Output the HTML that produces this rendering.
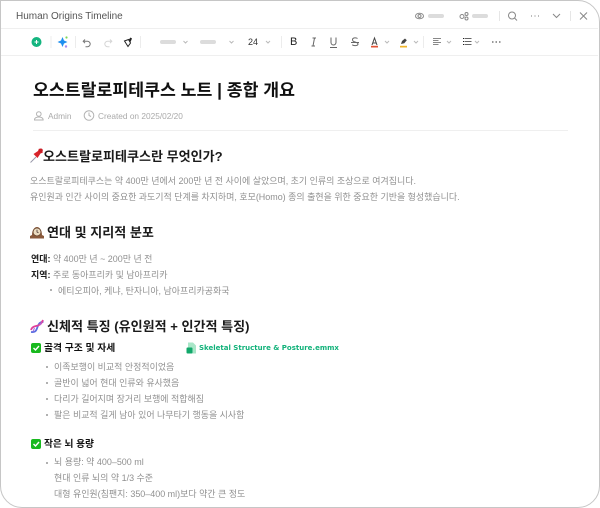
<!DOCTYPE html>
<html lang="ko"><head><meta charset="utf-8">
<style>
html,body{margin:0;padding:0;background:#fff}
#w{position:relative;width:600px;height:508px;overflow:hidden;background:#fff;font-family:"Liberation Sans","Noto Sans CJK KR",sans-serif}
#f{position:absolute;left:0;top:0;width:598px;height:506px;border:1px solid #c6c6c6;border-radius:0 22px 22px 22px;pointer-events:none;z-index:5}
.t{position:absolute;white-space:nowrap;line-height:16px}
.h{font-weight:700;color:#1a1a1a;font-size:13.05px}
.p{font-size:8.96px;color:#909090}
.b{font-weight:700;color:#1a1a1a}
.d{position:absolute;width:2px;height:2px;border-radius:50%;background:#999}
.l{position:absolute;background:#efefef}
.g{position:absolute;height:4px;background:#dcdcdc;border-radius:2px}
svg{position:absolute;overflow:visible}
.s{fill:none;stroke:#888;stroke-width:1}
</style></head><body>
<div id="w">
<div id="f"></div>
<div class="t" style="left:16px;top:9px;font-size:10px;color:#555">Human Origins Timeline</div>
<div class="l" style="left:1px;top:28px;width:597px;height:1px"></div>
<div class="l" style="left:1px;top:55px;width:597px;height:1px"></div>

<svg style="left:0;top:0" width="600" height="56">
<ellipse class="s" cx="419.500" cy="16" rx="4" ry="2.800"/><circle class="s" cx="419.500" cy="16" r="1.500"/>
<circle class="s" cx="462" cy="16.500" r="2"/><circle class="s" cx="466.500" cy="14" r="1.500"/><circle class="s" cx="466.500" cy="18.500" r="1.500"/>
<circle class="s" cx="512" cy="15.500" r="3.500"/><path class="s" d="M514.500 18l2.500 2.500"/>
<path d="M531 16h1M534.500 16h1M538 16h1" stroke="#777" fill="none"/>
<path class="s" d="M553 14l3.500 3.500 3.500-3.500"/>
<path class="s" d="M580 12.500l7 7M587 12.500l-7 7"/>
<path d="M499.500 11v10M570.500 11v10" stroke="#e6e6e6"/>
<circle cx="36.500" cy="42" r="5" fill="#14b57f"/><path d="M34.500 42h4M36.500 40v4" stroke="#fff"/>
<path d="M51 36v12M75.500 36v12M140.500 36v12M281.500 36v12M423.500 36v12" stroke="#ececec"/>
<path d="M62.500 37l1.500 3.500 3.500 1.500-3.500 1.500-1.500 3.500-1.500-3.500-3.500-1.500 3.500-1.500z" fill="#1e8fef"/>
<circle cx="66.500" cy="37.500" r="1.100" fill="#7ed957"/><circle cx="66" cy="46.500" r="1.200" fill="#a98bf0"/>
<path d="M85 39.500l-1.800 1.800 1.800 1.800M83.400 41.300h4.100a2.700 2.700 0 0 1 0 5.400h-2" fill="none" stroke="#777"/>
<path d="M110 39.500l1.800 1.800-1.800 1.800M111.600 41.300h-4.100a2.700 2.700 0 0 0 0 5.400h2" fill="none" stroke="#d5d5d5"/>
<path d="M124.500 41l4-1.500 2 3.500-2.500 3.500z" fill="#fff" stroke="#222"/><path d="M128.500 40l2-2.500 1.500 1-1.500 3.500z" fill="#222"/>
<path d="M183.500 41l2 2 2-2M229.500 41l2 2 2-2M266 41l2 2 2-2M385 41l2 2 2-2M414 41l2 2 2-2M447 41l2 2 2-2M475 41l2 2 2-2" fill="none" stroke="#bbb"/>
<path d="M314.500 38l-1.500 8M312.500 38h3.500M311.500 46h3.500" stroke="#666" fill="none"/>
<path d="M331 37.500v5a2.500 2.500 0 0 0 5 0v-5M330 47.500h7" stroke="#666" fill="none"/>
<path d="M357.500 38.500c-1-1-5-1-5 1.200 0 3 5.500 1.800 5.500 4.300 0 2-4.500 2-5.800.8M351 42.500h8" stroke="#666" fill="none"/>
<path d="M372 45l2.500-7 2.500 7M373 43h3" stroke="#444" fill="none"/><rect x="371" y="45.800" width="7" height="1.700" fill="#e25336"/>
<path d="M401 44l1-3 3-2.500 1.800 1.800-2.500 3z" fill="#444"/><rect x="400" y="45.800" width="7" height="1.700" fill="#f0b429"/>
<path d="M433 38.500h8M433 40.500h5.500M433 42.500h8M433 44.500h5.500" stroke="#888" fill="none"/>
<path d="M464.500 38.500h7M464.500 41.500h7M464.500 44.500h7" stroke="#666" fill="none"/><path d="M463 38.500h1M463 41.500h1M463 44.500h1" stroke="#222" fill="none"/>
<path d="M492 42h1.500M495.500 42h1.500M499 42h1.500" stroke="#333" fill="none"/>
<circle cx="38.800" cy="114" r="2.300" style="stroke:#b3b3b3;fill:none"/><path d="M34.500 120v-.5c0-1.500 2-2.500 4.300-2.500s4.300 1 4.300 2.500v.5z" style="stroke:#b3b3b3;fill:none"/>
<circle cx="89" cy="115.500" r="4.800" style="stroke:#b3b3b3;fill:none"/><path d="M89 112.500v3l2 1" style="stroke:#b3b3b3;fill:none"/>
<path d="M33 130.500h535" stroke="#efefef"/>
<!-- pin -->
<path d="M30.500 162.500l5.500-5.500" stroke="#99a" fill="none"/>
<path d="M33.500 154l4.500-3 1-2.500 4 4-2.500 1-3 4.500z" fill="#d8232a"/><circle cx="40.800" cy="150.500" r="2" fill="#c81e26"/>
<!-- clock -->
<path d="M30 238.500v-2.500l2-1c0-5 2.500-8 5-8s5 3 5 8l2 1v2.500z" fill="#8a5a3c"/><circle cx="37" cy="232" r="3.900" fill="#ecdcc0" stroke="#5c3a25" stroke-width=".6"/><path d="M37 229.800v2.200l1.500 .8" stroke="#433" fill="none" stroke-width=".8"/>
<!-- dna -->
<path d="M31 332c5 .5 5.500-2 6.500-5s3-5.500 6-5" fill="none" stroke="#5b6ee0" stroke-width="1.800"/>
<path d="M31 330c.5-2 2.500-3.500 5-4s5-1 7-6" fill="none" stroke="#e0409a" stroke-width="1.800"/>
<path d="M33 331.500l1.500-3.500M40 325l1.500-2.500" stroke="#a86be0" fill="none"/>
<!-- checks -->
<rect x="31" y="343" width="10" height="10" rx="2" fill="#18b91e"/><path d="M33.500 348l2 2 3.500-4" fill="none" stroke="#fff" stroke-width="1.400"/>
<rect x="31" y="439" width="10" height="10" rx="2" fill="#18b91e"/><path d="M33.500 444l2 2 3.500-4" fill="none" stroke="#fff" stroke-width="1.400"/>
<!-- file -->
<path d="M188 342.500h5l3 3v8h-8z" fill="#a9e6c8"/><rect x="186.500" y="347.500" width="6" height="6" rx="1" fill="#12a86b"/>
</svg>

<div class="g" style="left:428px;top:14px;width:16px"></div>
<div class="g" style="left:472px;top:14px;width:16px"></div>
<div class="g" style="left:160px;top:40px;width:16px"></div>
<div class="g" style="left:200px;top:40px;width:16px"></div>
<div class="t" style="left:248px;top:34px;font-size:9px;color:#333">24</div>
<div class="t" style="left:290px;top:34px;font-size:11px;color:#222">B</div>

<div class="t" style="left:33px;top:78px;font-size:17.25px;line-height:24px;font-weight:700;color:#111">오스트랄로피테쿠스 노트 | 종합 개요</div>
<div class="t" style="left:48px;top:108px;font-size:8.300px;color:#aaa">Admin</div>
<div class="t" style="left:98px;top:108px;font-size:8.300px;color:#aaa">Created on 2025/02/20</div>

<div class="t h" style="left:43px;top:149px">오스트랄로피테쿠스란 무엇인가?</div>
<div class="t p" style="left:30px;top:173px">오스트랄로피테쿠스는 약 400만 년에서 200만 년 전 사이에 살았으며, 초기 인류의 조상으로 여겨집니다.</div>
<div class="t p" style="left:30px;top:189px">유인원과 인간 사이의 중요한 과도기적 단계를 차지하며, 호모(Homo) 종의 출현을 위한 중요한 기반을 형성했습니다.</div>

<div class="t h" style="left:47px;top:225px">연대 및 지리적 분포</div>
<div class="t p" style="left:31px;top:251px"><span class="b">연대:</span> 약 400만 년 ~ 200만 년 전</div>
<div class="t p" style="left:31px;top:267px"><span class="b">지역:</span> 주로 동아프리카 및 남아프리카</div>
<div class="d" style="left:50px;top:289px"></div>
<div class="t p" style="left:58px;top:283px">에티오피아, 케냐, 탄자니아, 남아프리카공화국</div>

<div class="t h" style="left:47px;top:319px">신체적 특징 (유인원적 + 인간적 특징)</div>
<div class="t" style="left:44px;top:341px;font-size:9.800px;font-weight:700;color:#111">골격 구조 및 자세</div>
<div class="t" style="left:199px;top:340px;font-size:7px;font-weight:700;color:#12b27a;font-family:'DejaVu Sans',sans-serif">Skeletal Structure &amp; Posture.emmx</div>

<div class="d" style="left:46px;top:366px"></div><div class="t p" style="left:54px;top:359px">이족보행이 비교적 안정적이었음</div>
<div class="d" style="left:46px;top:382px"></div><div class="t p" style="left:54px;top:375px">골반이 넓어 현대 인류와 유사했음</div>
<div class="d" style="left:46px;top:398px"></div><div class="t p" style="left:54px;top:391px">다리가 길어지며 장거리 보행에 적합해짐</div>
<div class="d" style="left:46px;top:414px"></div><div class="t p" style="left:54px;top:407px">팔은 비교적 길게 남아 있어 나무타기 행동을 시사함</div>

<div class="t" style="left:44px;top:437px;font-size:9.700px;font-weight:700;color:#111">작은 뇌 용량</div>
<div class="d" style="left:46px;top:462px"></div><div class="t p" style="left:54px;top:454px">뇌 용량: 약 400–500 ml</div>
<div class="t p" style="left:54px;top:470px">현대 인류 뇌의 약 1/3 수준</div>
<div class="t p" style="left:54px;top:486px">대형 유인원(침팬지: 350–400 ml)보다 약간 큰 정도</div>
</div>
</body></html>
